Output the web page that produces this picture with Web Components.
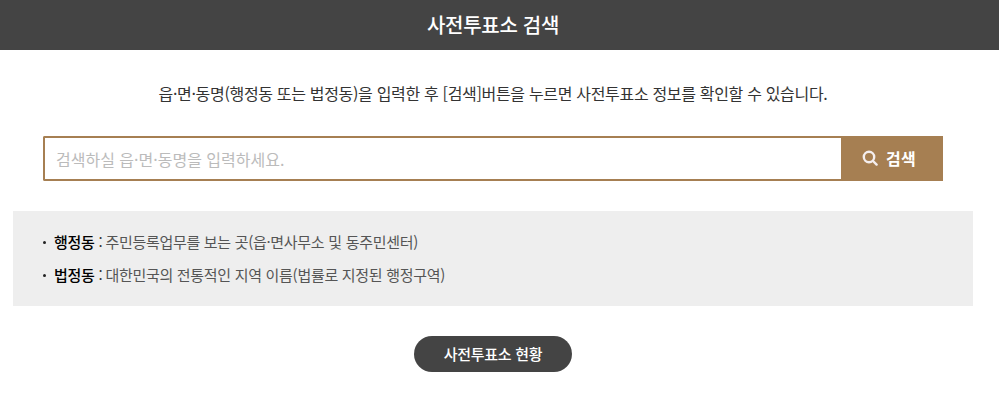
<!DOCTYPE html>
<html lang="ko">
<head>
<meta charset="utf-8">
<title>사전투표소 검색</title>
<style>
  html, body { margin: 0; padding: 0; background: #fff; }
  body { font-family: "Noto Sans CJK KR", "Noto Sans", sans-serif; color: #333; }
</style>
</head>
<body>
<vote-page>
  <vote-header slot="header">사전투표소 검색</vote-header>
  <p slot="intro">읍·면·동명(행정동 또는 법정동)을 입력한 후 [검색]버튼을 누르면 사전투표소 정보를 확인할 수 있습니다.</p>
  <vote-search slot="search" placeholder="검색하실 읍·면·동명을 입력하세요." label="검색"></vote-search>
  <vote-notes slot="notes">
    <vote-note term="행정동">주민등록업무를 보는 곳(읍·면사무소 및 동주민센터)</vote-note>
    <vote-note term="법정동">대한민국의 전통적인 지역 이름(법률로 지정된 행정구역)</vote-note>
  </vote-notes>
  <vote-pill slot="action">사전투표소 현황</vote-pill>
</vote-page>

<script>
class VotePage extends HTMLElement {
  constructor() {
    super();
    this.attachShadow({ mode: "open" });
    this.shadowRoot.innerHTML = `
      <style>
        :host { display: block; }
        .top { background: #444; }
        .inner { width: 960px; margin-left: 13px; }
        .intro { height: 86px; display: flex; align-items: center; justify-content: center; }
        ::slotted(p) {
          margin: 0;
          font-size: 16px;
          line-height: 22px;
          letter-spacing: -0.32px;
          color: #333;
          white-space: nowrap;
        }
        .search { padding: 0 30px; }
        .notes { margin-top: 30px; }
        .action { display: flex; justify-content: center; margin-top: 30px; }
      </style>
      <div class="top"><div class="inner"><slot name="header"></slot></div></div>
      <div class="inner">
        <div class="intro"><slot name="intro"></slot></div>
        <div class="search"><slot name="search"></slot></div>
        <div class="notes"><slot name="notes"></slot></div>
        <div class="action"><slot name="action"></slot></div>
      </div>
    `;
  }
}

class VoteHeader extends HTMLElement {
  constructor() {
    super();
    this.attachShadow({ mode: "open" });
    this.shadowRoot.innerHTML = `
      <style>
        :host {
          display: block;
          height: 50px;
          line-height: 49px;
          text-align: center;
          color: #fff;
          font-size: 20px;
          font-weight: 500;
          letter-spacing: -0.3px;
        }
      </style>
      <slot></slot>
    `;
  }
}

class VoteSearch extends HTMLElement {
  constructor() {
    super();
    this.attachShadow({ mode: "open" });
    this.shadowRoot.innerHTML = `
      <style>
        :host { display: flex; height: 45px; }
        input {
          flex: 1;
          min-width: 0;
          box-sizing: border-box;
          height: 45px;
          border: 2px solid #a67f52;
          border-right: 0;
          border-radius: 2px 0 0 2px;
          padding: 0 11px;
          font: 400 16px "Noto Sans CJK KR", sans-serif;
          outline: none;
          background: #fff;
        }
        input::placeholder { color: #bbb; opacity: 1; }
        button {
          width: 102px;
          height: 45px;
          border: 0;
          padding: 0 6px 2px 0;
          background: #a67f52;
          color: #fff;
          font: 700 16px "Noto Sans CJK KR", sans-serif;
          letter-spacing: 0.4px;
          display: flex;
          align-items: center;
          justify-content: center;
          gap: 8px;
        }
        svg { width: 16px; height: 16px; display: block; }
      </style>
      <input type="text">
      <button type="button">
        <svg viewBox="0 0 16 16" fill="none" stroke="#f4eeee" stroke-width="2.4" stroke-linecap="round">
          <circle cx="7" cy="7" r="5.2"/>
          <path d="M11 11 L14.6 14.6"/>
        </svg>
        <span></span>
      </button>
    `;
  }

  connectedCallback() {
    this.shadowRoot.querySelector("input").placeholder = this.getAttribute("placeholder") || "";
    this.shadowRoot.querySelector("span").textContent = this.getAttribute("label") || "";
  }
}

class VoteNotes extends HTMLElement {
  constructor() {
    super();
    this.attachShadow({ mode: "open" });
    this.shadowRoot.innerHTML = `
      <style>
        :host {
          display: flex;
          flex-direction: column;
          justify-content: center;
          gap: 11px;
          height: 95px;
          box-sizing: border-box;
          padding-left: 30px;
          background: #eee;
        }
      </style>
      <slot></slot>
    `;
  }
}

class VoteNote extends HTMLElement {
  constructor() {
    super();
    this.attachShadow({ mode: "open" });
    this.shadowRoot.innerHTML = `
      <style>
        :host {
          display: flex;
          align-items: center;
          height: 22px;
          font-size: 15px;
          line-height: 22px;
          letter-spacing: -0.3px;
          color: #555;
          white-space: nowrap;
        }
        .dot { width: 3px; height: 3px; background: #222; border-radius: 50%; margin-right: 8px; }
        b { font-weight: 500; color: #000; }
        .sep { margin: 0 3px 0 4px; color: #333; }
      </style>
      <span class="dot"></span><b></b><span class="sep">:</span><slot></slot>
    `;
  }

  connectedCallback() {
    this.shadowRoot.querySelector("b").textContent = this.getAttribute("term");
  }
}

class VotePill extends HTMLElement {
  constructor() {
    super();
    this.attachShadow({ mode: "open" });
    this.shadowRoot.innerHTML = `
      <style>
        :host {
          display: block;
          width: 158px;
          height: 36px;
          line-height: 35px;
          border-radius: 18px;
          background: #444;
          color: #fff;
          text-align: center;
          font-size: 15px;
          font-weight: 500;
          letter-spacing: -0.3px;
        }
      </style>
      <slot></slot>
    `;
  }
}

customElements.define("vote-page", VotePage);
customElements.define("vote-header", VoteHeader);
customElements.define("vote-search", VoteSearch);
customElements.define("vote-notes", VoteNotes);
customElements.define("vote-note", VoteNote);
customElements.define("vote-pill", VotePill);
</script>
</body>
</html>
